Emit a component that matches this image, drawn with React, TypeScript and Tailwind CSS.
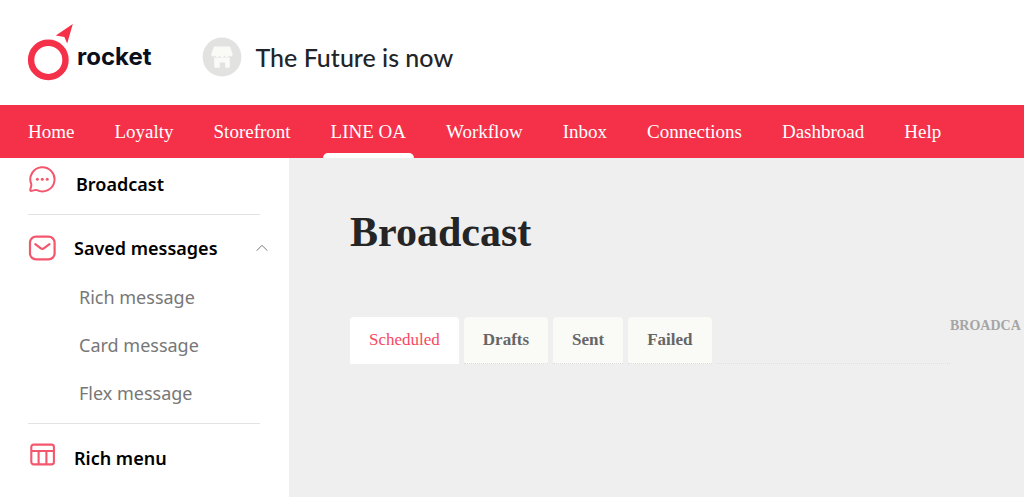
import React from 'react';

const navItems = ['Home', 'Loyalty', 'Storefront', 'LINE OA', 'Workflow', 'Inbox', 'Connections', 'Dashbroad', 'Help'];
const savedItems = ['Rich message', 'Card message', 'Flex message'];
const tabs = ['Scheduled', 'Drafts', 'Sent', 'Failed'];

function RocketLogo() {
  return (
    <svg className="h-14 w-12 shrink-0 overflow-visible" viewBox="0 0 48 56" fill="none" aria-hidden="true">
      <circle cx="20.3" cy="34.9" r="17.2" stroke="#f53049" strokeWidth="6.4" />
      <path d="M44.8 -1 L39.2 18.6 L36.4 12 L27.8 10.6 Z" fill="#f53049" />
    </svg>
  );
}

function StoreIcon() {
  return (
    <svg className="size-10 shrink-0" viewBox="0 0 40 40" aria-hidden="true">
      <circle cx="20" cy="20" r="19.4" fill="#e2e2e1" />
      <path
        d="M12 9.5h16l2.6 7.2v1.1a2 2 0 0 1-3.6.8 2.4 2.4 0 0 1-4.6 0 2.4 2.4 0 0 1-4.7 0 2.4 2.4 0 0 1-4.6 0 2 2 0 0 1-3.7-.8v-1.1z"
        fill="#fafaf7"
      />
      <path d="M12.2 20.6h15.6v9q0 1.2-1.2 1.2h-3.4v-5.4h-5.4v5.4h-4.4q-1.2 0-1.2-1.2z" fill="#fafaf7" />
    </svg>
  );
}

function ChatIcon() {
  return (
    <svg className="size-7 shrink-0" viewBox="0 0 28 28" fill="none" aria-hidden="true">
      <path
        d="M3.2 17.9A12.1 12.1 0 1 1 9 24.2Q7.8 23.7 6.6 24.1L3.7 24.9Q2 25.3 2.3 23.6L3.1 20.6Q3.5 19.2 3.2 17.9Z"
        stroke="#f3576e"
        strokeWidth="2"
        strokeLinejoin="round"
      />
      <circle cx="9.4" cy="13.3" r="1.5" fill="#f3576e" />
      <circle cx="14.3" cy="13.3" r="1.5" fill="#f3576e" />
      <circle cx="19.2" cy="13.3" r="1.5" fill="#f3576e" />
    </svg>
  );
}

function MailIcon() {
  return (
    <svg className="size-7 shrink-0" viewBox="0 0 28 28" fill="none" stroke="#f3576e" strokeWidth="2.2" strokeLinecap="round" strokeLinejoin="round" aria-hidden="true">
      <rect x="2" y="2.6" width="24.6" height="22.8" rx="6" />
      <path d="M7.3 10.2l5.2 4q1.8 1.3 3.6 0l5.4-4" />
    </svg>
  );
}

function TableIcon() {
  return (
    <svg className="size-7 shrink-0" viewBox="0 0 28 28" fill="none" stroke="#f3576e" strokeWidth="2.1" aria-hidden="true">
      <rect x="3.3" y="4.6" width="22.6" height="19.8" rx="2.4" />
      <path d="M3.3 11h22.6M10.6 11v13.4M18.4 11v13.4" />
    </svg>
  );
}

function ChevronUp() {
  return (
    <svg className="h-2 w-3 shrink-0" viewBox="0 0 12 8" fill="none" stroke="#777" strokeWidth="1" aria-hidden="true">
      <path d="M.7 6.7L6 1.3l5.3 5.4" />
    </svg>
  );
}

export default function App() {
  return (
    <div className="flex min-h-screen flex-col overflow-x-hidden bg-white font-['Liberation_Serif',serif]">
      <header className="flex h-[105px] items-center pl-7">
        <a href="#home" className="flex items-center text-[#0b0f1c]">
          <RocketLogo />
          <span className="ml-px mt-2 font-[Inter,sans-serif] text-2xl font-bold">rocket</span>
        </a>
        <div className="ml-[50px] mt-2 flex items-center gap-[14px]">
          <StoreIcon />
          <span className="font-[Lato,sans-serif] text-[25px] font-medium leading-8 text-[#212529]">The Future is now</span>
        </div>
      </header>

      <nav className="flex h-[53px] bg-[#f53049] pl-5 text-[19px] text-white">
        <ul className="flex gap-6">
          {navItems.map((item) => (
            <li key={item} className="flex">
              <a href={'#' + item} className="flex flex-col justify-between whitespace-nowrap">
                <span className="px-2 pt-[13px] leading-7">{item}</span>
                {item === 'LINE OA' && <span className="h-[5px] rounded-t-[5px] bg-white" />}
              </a>
            </li>
          ))}
        </ul>
      </nav>

      <div className="flex flex-1 bg-[#efefef]">
        <aside className="w-[289px] shrink-0 bg-white pl-7 pr-[29px] font-['Noto_Sans',sans-serif] text-lg text-black">
          <a href="#broadcast" className="flex h-14 gap-5 pt-2 font-semibold">
            <ChatIcon />
            <span className="pt-1">Broadcast</span>
          </a>
          <div className="border-y border-[#e3e3e3]">
            <button type="button" className="flex h-[58px] w-[240px] items-center gap-[18px] pt-2 text-left font-semibold">
              <MailIcon />
              <span className="flex-1 whitespace-nowrap">Saved messages</span>
              <ChevronUp />
            </button>
            <ul className="pb-[6px] pl-[51px] text-[#777]">
              {savedItems.map((item) => (
                <li key={item}>
                  <a href={'#' + item} className="block h-12 leading-[48px]">{item}</a>
                </li>
              ))}
            </ul>
          </div>
          <a href="#rich-menu" className="flex gap-[18px] pt-4 font-semibold">
            <TableIcon />
            <span className="pt-1">Rich menu</span>
          </a>
        </aside>

        <main className="min-w-0 flex-1 overflow-hidden pl-[61px] pt-12">
          <h1 className="text-[42px] font-bold leading-[52px] text-[#252525]">Broadcast</h1>
          <div className="mt-[58px] flex">
            <div role="tablist" className="flex h-[49px] min-w-0 flex-1 gap-[5px] pt-px">
              {tabs.map((tab, i) => (
                <button
                  key={tab}
                  type="button"
                  role="tab"
                  aria-selected={i === 0}
                  className={
                    i === 0
                      ? 'h-[47px] rounded-t border-b border-white bg-white px-[19px] text-[17px] text-[#f8485f]'
                      : 'h-[47px] rounded-t border-b border-dotted border-[#ddd] bg-[#fafaf7] px-[19px] text-[17px] font-bold text-[#666]'
                  }
                >
                  {tab}
                </button>
              ))}
              <div className="h-[47px] flex-1 border-b border-dotted border-[#e0e0e0]" />
            </div>
            <span className="w-[74px] shrink-0 overflow-hidden whitespace-nowrap text-sm font-bold text-[#a5a5a5]">BROADCA</span>
          </div>
        </main>
      </div>
    </div>
  );
}
